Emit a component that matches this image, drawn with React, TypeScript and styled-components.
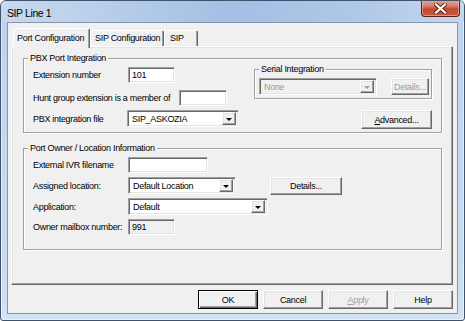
import React from "react";
import styled, { createGlobalStyle, css } from "styled-components";

const GlobalStyle = createGlobalStyle`
  html, body { margin: 0; padding: 0; }
  body {
    width: 465px;
    height: 321px;
    overflow: hidden;
    background: #ffffff;
    font-family: "Liberation Sans", Arial, sans-serif;
    font-size: 9px;
    letter-spacing: -0.3px;
    color: #000;
  }
  * { box-sizing: border-box; }
`;

const raised = css`
  border: 1px solid;
  border-color: #ffffff #696969 #696969 #ffffff;
  box-shadow: inset -1px -1px 0 #a0a0a0, inset 1px 1px 0 #e3e3e3;
`;

const sunken = css`
  border: 1px solid;
  border-color: #a0a0a0 #ffffff #ffffff #a0a0a0;
  box-shadow: inset 1px 1px 0 #696969, inset -1px -1px 0 #e3e3e3;
`;

const Window = styled.div`
  width: 465px;
  height: 321px;
  display: flex;
  flex-direction: column;
  border: 1px solid #40536c;
  border-radius: 6px 6px 3px 3px;
  padding: 0 6px 6px 6px;
  background: linear-gradient(180deg, #bcd2ee 0%, #c3d7ef 40%, #c9dbf1 80%, #d3e2f4 100%);
  box-shadow: inset 0 0 0 1px rgba(255, 255, 255, 0.55);
  overflow: hidden;
`;

const TitleBar = styled.div`
  height: 21px;
  display: flex;
  align-items: flex-start;
  justify-content: space-between;
  margin: 0 -6px;
  padding: 0 0 0 6px;
  background: linear-gradient(
    90deg,
    #c8d9ef 0%,
    #b6cdea 25%,
    #a3bfe4 50%,
    #adc7e7 75%,
    #c4d7ee 100%
  );
`;

const Title = styled.span`
  font-size: 10.5px;
  letter-spacing: -0.4px;
  line-height: 12px;
  margin-top: 6px;
  color: #000;
`;

const CloseButton = styled.div`
  width: 39px;
  height: 17px;
  margin-top: -1px;
  margin-right: 4px;
  border: 1px solid #5a2018;
  border-top: none;
  border-radius: 0 0 4px 4px;
  background: linear-gradient(180deg, #e8a898 0%, #d67a66 40%, #c34a32 55%, #c75a3e 100%);
  box-shadow: inset 0 0 0 1px rgba(255, 220, 210, 0.45);
  display: flex;
  align-items: center;
  justify-content: center;
`;

const Client = styled.div`
  flex: 1;
  display: flex;
  flex-direction: column;
  background: #f0f0f0;
  border: 1px solid #8597ad;
  padding: 5px 4px 4px 3px;
`;

const TabStrip = styled.div`
  height: 18px;
  display: flex;
  align-items: flex-end;
  padding-left: 2px;
  position: relative;
  z-index: 2;
`;

const Tab = styled.div<{ $w: number; $pl: number; $active?: boolean }>`
  width: ${(p) => p.$w}px;
  height: ${(p) => (p.$active ? 20 : 16)}px;
  margin-bottom: ${(p) => (p.$active ? -2 : 0)}px;
  padding-left: ${(p) => p.$pl}px;
  padding-top: ${(p) => (p.$active ? 3 : 1)}px;
  background: #f0f0f0;
  border-left: 1px solid #ffffff;
  border-top: 1px solid #ffffff;
  border-right: 1px solid #696969;
  border-radius: 2px 2px 0 0;
  box-shadow: inset -1px 0 0 #a0a0a0;
  white-space: nowrap;
  line-height: 12px;
`;

const Panel = styled.div`
  flex: 1;
  display: flex;
  flex-direction: column;
  border: 1px solid;
  border-color: #ffffff #696969 #696969 #ffffff;
  box-shadow: inset -1px -1px 0 #a0a0a0, inset 1px 1px 0 #e3e3e3;
  padding: 5px 10px 0 11px;
`;

const Group = styled.fieldset<{ $mt?: number }>`
  margin: ${(p) => p.$mt ?? 0}px 0 0 0;
  padding: 0;
  min-width: 0;
  border: 1px solid #a0a0a0;
  box-shadow: inset 1px 1px 0 #ffffff, 1px 1px 0 #ffffff;
`;

const Legend = styled.legend`
  margin-left: 4px;
  padding: 0 2px;
  line-height: 12px;
  background: #f0f0f0;
`;

const GroupBody = styled.div`
  display: flex;
  justify-content: space-between;
  padding: 0 9px 0 9px;
`;

const Column = styled.div<{ $pb?: number; $pt?: number }>`
  display: flex;
  flex-direction: column;
  padding-top: ${(p) => p.$pt ?? 0}px;
  padding-bottom: ${(p) => p.$pb ?? 0}px;
`;

const Row = styled.div<{ $h: number; $mt?: number }>`
  display: flex;
  align-items: center;
  height: ${(p) => p.$h}px;
  margin-top: ${(p) => p.$mt ?? 0}px;
`;

const Label = styled.span<{ $w: number }>`
  width: ${(p) => p.$w}px;
  flex: none;
  white-space: nowrap;
  line-height: 12px;
`;

const TextBox = styled.div<{ $w: number; $readonly?: boolean }>`
  ${sunken};
  width: ${(p) => p.$w}px;
  height: 16px;
  background: ${(p) => (p.$readonly ? "#f0f0f0" : "#ffffff")};
  padding: 1px 0 0 3px;
  line-height: 12px;
`;

const Combo = styled.div<{ $w: number; $disabled?: boolean }>`
  ${sunken};
  width: ${(p) => p.$w}px;
  height: 17px;
  display: flex;
  align-items: center;
  justify-content: space-between;
  padding: 2px 2px 2px 4px;
  background: ${(p) => (p.$disabled ? "#f0f0f0" : "#ffffff")};
  color: ${(p) => (p.$disabled ? "#9a9a9a" : "#000")};
  line-height: 12px;
`;

const ComboArrow = styled.div<{ $disabled?: boolean }>`
  ${raised};
  width: 14px;
  height: 13px;
  flex: none;
  background: #f0f0f0;
  display: flex;
  align-items: center;
  justify-content: center;
  &::after {
    content: "";
    border-left: 3px solid transparent;
    border-right: 3px solid transparent;
    border-top: 3px solid ${(p) => (p.$disabled ? "#a0a0a0" : "#000")};
    margin-top: 1px;
  }
`;

const Button = styled.div<{ $w: number; $h?: number; $disabled?: boolean; $default?: boolean; $mt?: number; $ml?: number }>`
  width: ${(p) => p.$w}px;
  height: ${(p) => p.$h ?? 19}px;
  margin-top: ${(p) => p.$mt ?? 0}px;
  margin-left: ${(p) => p.$ml ?? 0}px;
  flex: none;
  display: flex;
  align-items: center;
  justify-content: center;
  background: #f0f0f0;
  line-height: 12px;
  color: ${(p) => (p.$disabled ? "#a0a0a0" : "#000")};
  ${(p) =>
    p.$default
      ? css`
          border: 1px solid #000;
          box-shadow: inset 1px 1px 0 #ffffff, inset -1px -1px 0 #696969, inset -2px -2px 0 #a0a0a0;
        `
      : raised}
`;

const U = styled.span`
  text-decoration: underline;
  text-underline-offset: 1px;
`;

const SerialGroup = styled(Group)`
  width: 178px;
  margin-top: -1px;
`;

const SerialBody = styled.div`
  display: flex;
  justify-content: space-between;
  align-items: center;
  padding: 3px 2px 3px 4px;
`;

const RightColumn = styled.div`
  display: flex;
  flex-direction: column;
  align-items: flex-end;
`;

const ButtonRow = styled.div`
  margin-top: 5px;
  display: flex;
  justify-content: flex-end;
  gap: 5px;
`;

function CloseIcon() {
  return (
    <svg width="13" height="11" viewBox="0 0 13 11">
      <path d="M2 1.5 L11 9.5 M11 1.5 L2 9.5" stroke="#5a1e14" strokeWidth="4" strokeLinecap="square" />
      <path d="M2 1.5 L11 9.5 M11 1.5 L2 9.5" stroke="#ffffff" strokeWidth="2.2" strokeLinecap="square" />
    </svg>
  );
}

export default function App() {
  return (
    <>
      <GlobalStyle />
      <Window>
        <TitleBar>
          <Title>SIP Line 1</Title>
          <CloseButton>
            <CloseIcon />
          </CloseButton>
        </TitleBar>
        <Client>
          <TabStrip>
            <Tab $w={77} $pl={3} $active>
              Port Configuration
            </Tab>
            <Tab $w={74} $pl={4}>
              SIP Configuration
            </Tab>
            <Tab $w={34} $pl={5}>
              SIP
            </Tab>
          </TabStrip>
          <Panel>
            <Group>
              <Legend>PBX Port Integration</Legend>
              <GroupBody>
                <Column $pt={3} $pb={5}>
                  <Row $h={16}>
                    <Label $w={95}>Extension number</Label>
                    <TextBox $w={47}>101</TextBox>
                  </Row>
                  <Row $h={16} $mt={7}>
                    <Label $w={146}>Hunt group extension is a member of</Label>
                    <TextBox $w={48} />
                  </Row>
                  <Row $h={17} $mt={4}>
                    <Label $w={94}>PBX integration file</Label>
                    <Combo $w={112}>
                      SIP_ASKOZIA
                      <ComboArrow />
                    </Combo>
                  </Row>
                </Column>
                <RightColumn>
                  <SerialGroup>
                    <Legend>Serial Integration</Legend>
                    <SerialBody>
                      <Combo $w={118} $disabled>
                        None
                        <ComboArrow $disabled />
                      </Combo>
                      <Button $w={38} $h={17} $disabled>
                        Details...
                      </Button>
                    </SerialBody>
                  </SerialGroup>
                  <Button $w={71} $mt={11}>
                    <span>
                      <U>A</U>dvanced...
                    </span>
                  </Button>
                </RightColumn>
              </GroupBody>
            </Group>
            <Group $mt={9}>
              <Legend>Port Owner / Location Information</Legend>
              <GroupBody>
                <Column $pt={1} $pb={12}>
                  <Row $h={20}>
                    <Label $w={95}>External IVR filename</Label>
                    <TextBox $w={80} />
                  </Row>
                  <Row $h={21}>
                    <Label $w={95}>Assigned location:</Label>
                    <Combo $w={108}>
                      Default Location
                      <ComboArrow />
                    </Combo>
                    <Button $w={72} $h={18} $ml={34}>
                      Details...
                    </Button>
                  </Row>
                  <Row $h={21}>
                    <Label $w={95}>Application:</Label>
                    <Combo $w={140}>
                      Default
                      <ComboArrow />
                    </Combo>
                  </Row>
                  <Row $h={20}>
                    <Label $w={95}>Owner mailbox number:</Label>
                    <TextBox $w={47} $readonly>
                      991
                    </TextBox>
                  </Row>
                </Column>
              </GroupBody>
            </Group>
          </Panel>
          <ButtonRow>
            <Button $w={60} $default>
              OK
            </Button>
            <Button $w={60}>Cancel</Button>
            <Button $w={60} $disabled>
              <span>
                <U>A</U>pply
              </span>
            </Button>
            <Button $w={60}>Help</Button>
          </ButtonRow>
        </Client>
      </Window>
    </>
  );
}
